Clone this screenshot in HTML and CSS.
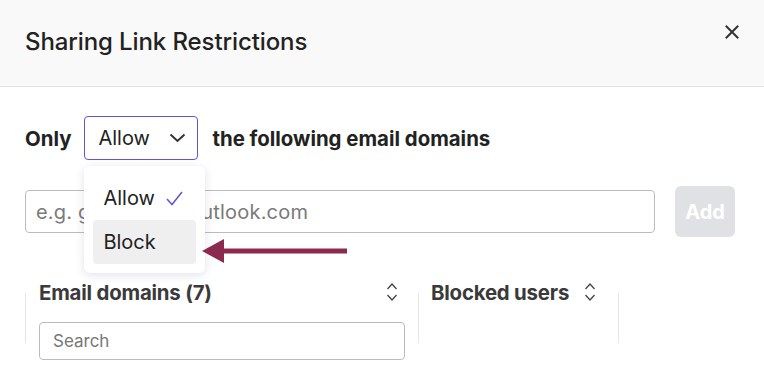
FILE: index.html
```html
<!DOCTYPE html>
<html>
<head>
<meta charset="utf-8">
<link rel="stylesheet" href="styles.css">
</head>
<body>
<div class="modal">
  <header class="modal-header">
    <h1 class="modal-title">Sharing Link Restrictions</h1>
    <button class="close-btn" aria-label="Close">
      <svg width="14" height="14" viewBox="0 0 14 14"><path d="M1.5 1.5 L12.5 12.5 M12.5 1.5 L1.5 12.5" stroke="#333" stroke-width="2" fill="none" stroke-linecap="square"/></svg>
    </button>
  </header>
  <main class="modal-body">
    <div class="mode-row">
      <span class="bold-label only">Only</span>
      <div class="select-wrap">
        <div class="select-box">
          <span>Allow</span>
          <svg width="17" height="10" viewBox="0 0 17 10"><path d="M1.5 1.5 L8.5 8 L15.5 1.5" stroke="#333" stroke-width="2" fill="none"/></svg>
        </div>
        <div class="menu">
          <div class="menu-item">Allow
            <svg class="check" width="17" height="15" viewBox="0 0 17 15"><path d="M1 8 L6 13.5 L16 1" stroke="#6b4fd6" stroke-width="1.5" fill="none"/></svg>
          </div>
          <div class="menu-item active">Block</div>
        </div>
      </div>
      <span class="bold-label">the following email domains</span>
    </div>
    <div class="add-row">
      <input class="domain-input" type="text" placeholder="e.g. gmail.com, outlook.com">
      <button class="add-btn">Add</button>
    </div>
    <div class="columns">
      <div class="sep"></div>
      <div class="col col-domains">
        <div class="col-head">
          <span>Email domains (7)</span>
          <svg class="sort" width="12" height="20" viewBox="0 0 12 20"><path d="M1.5 7 L6 2 L10.5 7 M1.5 13 L6 18 L10.5 13" stroke="#444" stroke-width="1.3" fill="none"/></svg>
        </div>
        <input class="search" type="text" placeholder="Search">
      </div>
      <div class="sep"></div>
      <div class="col col-blocked">
        <div class="col-head">
          <span>Blocked users</span>
          <svg class="sort" width="12" height="20" viewBox="0 0 12 20"><path d="M1.5 7 L6 2 L10.5 7 M1.5 13 L6 18 L10.5 13" stroke="#444" stroke-width="1.3" fill="none"/></svg>
        </div>
      </div>
      <div class="sep"></div>
    </div>
  </main>
  <svg class="annot-arrow" width="150" height="28" viewBox="0 0 150 28"><path d="M22 13 L147 13" stroke="#8b2a4e" stroke-width="5"/><path d="M2 13 L24 1 L24 25 Z" fill="#8b2a4e"/></svg>
</div>
</body>
</html>
```
FILE: styles.css
```css
* { box-sizing: border-box; }
html, body { margin: 0; padding: 0; background: #fff; }
body { font-family: Inter, "Noto Sans", sans-serif; color: #222; }
.modal { position: relative; width: 764px; height: 372px; overflow: hidden; }
.modal-header {
  height: 87px;
  background: #f9f9f9;
  border-bottom: 1px solid #e2e2e2;
  display: flex;
  justify-content: space-between;
  align-items: flex-start;
  padding: 26px 25px 0 25px;
}
.modal-title { margin: 0; font-size: 24px; font-weight: 500; line-height: 32px; color: #222; letter-spacing: -0.1px; }
.close-btn { border: 0; background: none; padding: 0; margin-top: -1px; width: 14px; height: 14px; display: flex; }
.modal-body { padding: 29px 29px 0 25px; }
.mode-row { display: flex; align-items: center; gap: 14px; height: 44px; }
.bold-label { font-size: 20.4px; font-weight: 700; color: #222; }
.only { margin-right: -1px; }
.select-wrap { position: relative; }
.select-box {
  width: 114px; height: 44px;
  border: 1px solid #6b4fd6; border-radius: 4px;
  display: flex; align-items: center; justify-content: space-between;
  padding: 0 11px 0 13px;
  font-size: 20px; color: #222;
}
.menu {
  position: absolute; top: 50px; left: 0;
  width: 121px; height: 107px;
  background: #fff; border-radius: 6px;
  box-shadow: 0 2px 10px rgba(60, 40, 120, 0.14);
  padding: 10px 9px 9px;
  z-index: 2;
  display: flex; flex-direction: column;
}
.menu-item {
  height: 44px; border-radius: 4px;
  display: flex; align-items: center;
  padding-left: 10px; font-size: 20px; color: #222;
}
.menu-item .check { margin-left: 11px; }
.menu-item.active { background: #efefef; }
.add-row { display: flex; align-items: center; gap: 20px; margin-top: 26px; }
.domain-input {
  flex: 1; height: 43px;
  border: 1px solid #bcbcbc; border-radius: 4px;
  padding: 0 10px; font-family: inherit; font-size: 20px; color: #222; letter-spacing: 0.2px;
}
.domain-input::placeholder { color: #7a7a7a; }
.add-btn {
  width: 60px; height: 51px; border: 0; border-radius: 6px;
  background: #e0e1e4; color: #fff; font-family: inherit;
  font-size: 20px; font-weight: 700;
}
.columns { display: flex; margin-top: 43px; }
.sep { width: 1px; height: 50px; margin-top: 13px; background: #e6e6e6; flex: none; }
.col { padding: 0 20px 0 13px; }
.col-domains { width: 392px; }
.col-blocked { width: 199px; padding-left: 12px; padding-right: 22px; }
.col-head {
  display: flex; justify-content: space-between; align-items: center;
  height: 24px; font-size: 20.4px; font-weight: 700; color: #3a3a3a; letter-spacing: -0.2px;
}
.sort { flex: none; }
.search {
  margin-top: 18px; width: 366px; height: 38px;
  border: 1px solid #bcbcbc; border-radius: 4px;
  padding: 0 13px; font-family: inherit; font-size: 17px;
}
.search::placeholder { color: #777; }
.annot-arrow { position: absolute; left: 200px; top: 238px; z-index: 3; }
```
